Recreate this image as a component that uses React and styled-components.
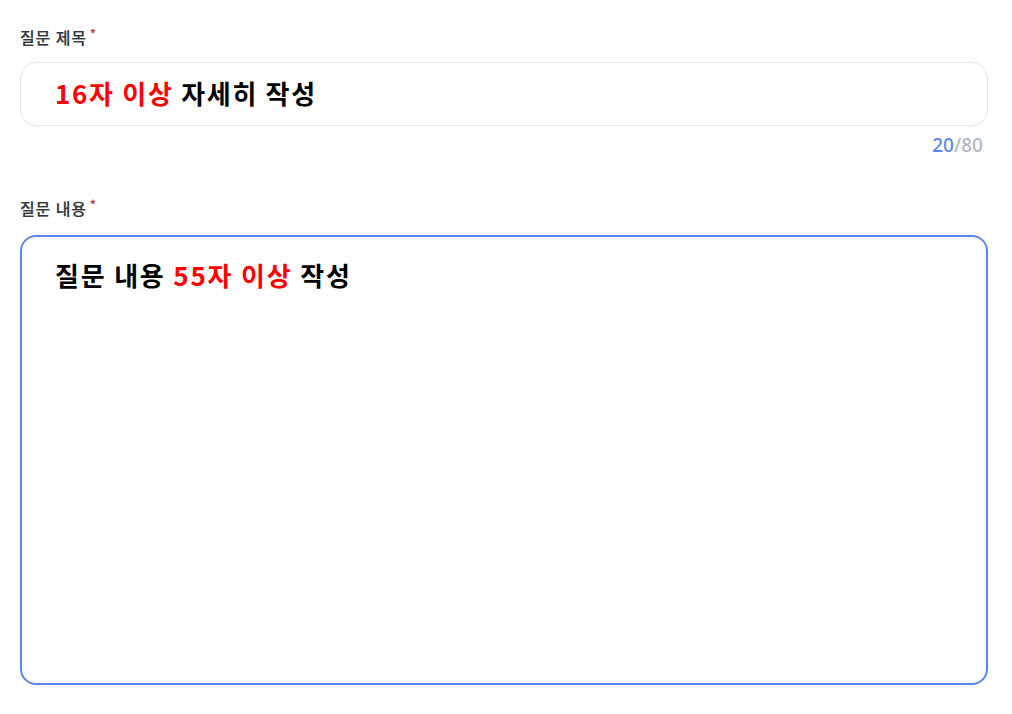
import React from 'react'
import styled, { createGlobalStyle } from 'styled-components'

const GlobalStyle = createGlobalStyle`
  html, body {
    margin: 0;
    padding: 0;
    background: #ffffff;
  }
  body {
    font-family: 'Noto Sans CJK KR', 'Noto Sans', sans-serif;
  }
`

function App() {
  return (
    <>
      <GlobalStyle />
      <Container>
        <Field>
          <Label>
            질문 제목<Required>*</Required>
          </Label>
          <TitleBox>
            <Red>16자 이상</Red> 자세히 작성
          </TitleBox>
          <Counter>
            <CounterCurrent>20</CounterCurrent>/80
          </Counter>
        </Field>
        <Field $gap>
          <Label>
            질문 내용<Required>*</Required>
          </Label>
          <ContentBox>
            질문 내용 <Red>55자 이상</Red> 작성
          </ContentBox>
        </Field>
      </Container>
    </>
  )
}

export default App

const Container = styled.div`
  display: flex;
  flex-direction: column;
  padding: 27px 24px 0 20px;
`
const Field = styled.div`
  display: flex;
  flex-direction: column;
  margin-top: ${(p) => (p.$gap ? '43px' : '0')};
`
const Label = styled.div`
  display: flex;
  align-items: flex-start;
  font-size: 16px;
  line-height: 20px;
  font-weight: 500;
  letter-spacing: 0.9px;
  color: #33363b;
  margin-bottom: 15px;
  -webkit-text-stroke: 0.2px #33363b;
`
const Required = styled.span`
  color: #f0303c;
  font-size: 12px;
  line-height: 12px;
  margin-left: 3px;
`
const Red = styled.span`
  color: #ff0000;
`
const TitleBox = styled.div`
  box-sizing: border-box;
  height: 64px;
  padding: 0 34px;
  border: 1px solid #e4e6ea;
  border-radius: 16px;
  font-size: 26px;
  line-height: 60px;
  font-weight: 700;
  letter-spacing: 1.7px;
  color: #000;
  white-space: pre;
`
const Counter = styled.div`
  align-self: flex-end;
  margin-top: 9px;
  margin-right: 5px;
  font-family: 'Noto Sans', sans-serif;
  font-size: 19px;
  line-height: 20px;
  font-weight: 500;
  color: #b2b7bf;
`
const CounterCurrent = styled.span`
  color: #5b87ec;
`
const ContentBox = styled.div`
  box-sizing: border-box;
  height: 450px;
  margin-top: 2px;
  padding: 20px 33px;
  border: 2px solid #5b87ec;
  border-radius: 16px;
  font-size: 26px;
  line-height: 36px;
  font-weight: 700;
  letter-spacing: 1.8px;
  color: #000;
  white-space: pre;
`
